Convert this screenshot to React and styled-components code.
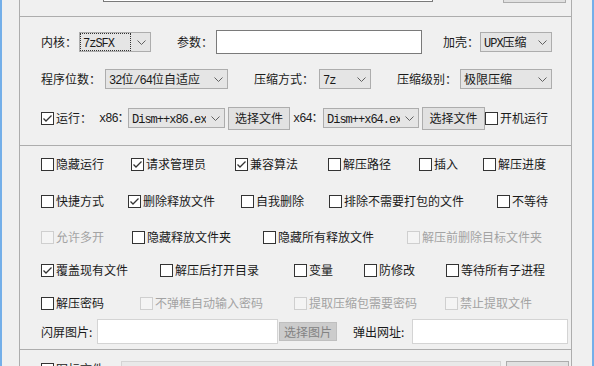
import React from "react";
import styled, { createGlobalStyle } from "styled-components";

const GlobalStyle = createGlobalStyle`
  html, body {
    margin: 0;
    padding: 0;
    background: #f0f0f0;
  }
  body {
    font-family: "Noto Sans CJK SC", "Noto Sans", sans-serif;
    font-size: 12px;
    color: #1a1a1a;
  }
`;

const Frame = styled.div`
  width: 594px;
  height: 366px;
  overflow: hidden;
  display: flex;
  background: #f0f0f0;
`;

const Edge = styled.div`
  width: ${(p) => p.$w}px;
  flex: none;
  box-sizing: border-box;
  border-${(p) => p.$side}: 2px solid #74afe9;
`;

const Panel = styled.div`
  width: 553px;
  flex: none;
  box-sizing: border-box;
  border-left: 1px solid #adadad;
  border-right: 1px solid #adadad;
  display: flex;
  flex-direction: column;
  overflow: hidden;
`;

const TopStrip = styled.div`
  height: 16px;
  flex: none;
  box-sizing: border-box;
  overflow: hidden;
  display: flex;
  align-items: flex-end;
  padding: 0 0 13px 83px;
`;

const Section = styled.div`
  border-top: 1px solid #adadad;
  padding: ${(p) => p.$pt}px 0 0 21px;
  height: ${(p) => p.$h}px;
  box-sizing: border-box;
  display: flex;
  flex-direction: column;
  flex: none;
`;

const Row = styled.div`
  display: flex;
  align-items: ${(p) => p.$align || "center"};
  height: ${(p) => p.$h || 20}px;
  margin-top: ${(p) => p.$mt || 0}px;
  flex: none;
`;

const Label = styled.span`
  width: ${(p) => p.$w}px;
  margin-left: ${(p) => p.$ml || 0}px;
  flex: none;
  white-space: nowrap;
  line-height: 16px;
`;

const Mono = styled.span`
  font-family: "Liberation Mono", "DejaVu Sans Mono", monospace;
  font-size: 12px;
  letter-spacing: -1px;
`;

const SelectBox = styled.div`
  width: ${(p) => p.$w}px;
  height: 20px;
  margin-left: ${(p) => p.$ml || 0}px;
  flex: none;
  box-sizing: border-box;
  background: #e5e5e5;
  border: 1px solid #adadad;
  display: flex;
  align-items: center;
  padding: 0 4px 0 1px;
`;

const Value = styled.span`
  flex: 1;
  min-width: 0;
  overflow: hidden;
  white-space: nowrap;
  height: 16px;
  line-height: 16px;
  padding-left: 2px;
  margin-right: ${(p) => (p.$focus ? 7 : 5)}px;
  box-sizing: border-box;
  outline: ${(p) => (p.$focus ? "1px dotted #333" : "none")};
`;

const TextBox = styled.div`
  width: ${(p) => p.$w}px;
  height: ${(p) => p.$h}px;
  margin-left: ${(p) => p.$ml || 0}px;
  margin-bottom: ${(p) => p.$mb || 0}px;
  flex: none;
  box-sizing: border-box;
  background: ${(p) => (p.$disabled ? "#e9e9e9" : "#fff")};
  border: 1px solid ${(p) => (p.$dark ? "#7a7a7a" : "#d4d4d4")};
  overflow: hidden;
  white-space: nowrap;
  padding: 1px 3px;
  line-height: 20px;
`;

const Button = styled.div`
  width: ${(p) => p.$w}px;
  height: ${(p) => p.$h || 23}px;
  margin-left: ${(p) => p.$ml || 0}px;
  flex: none;
  box-sizing: border-box;
  background: ${(p) => (p.$disabled ? "#cccccc" : "#e1e1e1")};
  border: 1px solid ${(p) => (p.$disabled ? "#bfbfbf" : "#adadad")};
  color: ${(p) => (p.$disabled ? "#838383" : "#1a1a1a")};
  display: flex;
  align-items: center;
  justify-content: center;
  white-space: nowrap;
  line-height: 16px;
`;

const CheckWrap = styled.label`
  width: ${(p) => (p.$w ? `${p.$w}px` : "auto")};
  flex: none;
  display: flex;
  align-items: center;
  gap: 2px;
  white-space: nowrap;
  line-height: 16px;
  color: ${(p) => (p.$disabled ? "#a3a3a3" : "#1a1a1a")};
`;

const Box = styled.span`
  width: 13px;
  height: 13px;
  flex: none;
  box-sizing: border-box;
  background: ${(p) => (p.$disabled ? "#f4f4f4" : "#fff")};
  border: 1px solid ${(p) => (p.$disabled ? "#cfcfcf" : "#333")};
  display: flex;
  align-items: center;
  justify-content: center;
`;

const mixed = (t) =>
  t
    .split(/([\x20-\x7e]+)/)
    .filter(Boolean)
    .map((s, i) => (/[\x20-\x7e]/.test(s) ? <Mono key={i}>{s}</Mono> : s));

const Chevron = () => (
  <svg width="9" height="5" viewBox="0 0 9 5" style={{ flex: "none" }}>
    <polyline points="0.5,0.5 4.5,4.5 8.5,0.5" fill="none" stroke="#606060" strokeWidth="1" />
  </svg>
);

const Select = ({ w, ml, value, focus }) => (
  <SelectBox $w={w} $ml={ml}>
    <Value $focus={focus}>{mixed(value)}</Value>
    <Chevron />
  </SelectBox>
);

const Check = ({ w, checked, disabled, children }) => (
  <CheckWrap $w={w} $disabled={disabled}>
    <Box $disabled={disabled}>
      {checked && (
        <svg width="11" height="11" viewBox="0 0 11 11">
          <polyline points="1.5,5.5 4,8 9.5,2.5" fill="none" stroke="#333" strokeWidth="1.3" />
        </svg>
      )}
    </Box>
    {children}
  </CheckWrap>
);

const checkRows = [
  {
    mt: 0,
    items: [
      ["隐藏运行", 90],
      ["请求管理员", 104, true],
      ["兼容算法", 93, true],
      ["解压路径", 91],
      ["插入", 64],
      ["解压进度"],
    ],
  },
  {
    mt: 17,
    items: [
      ["快捷方式", 87],
      ["删除释放文件", 113, true],
      ["自我删除", 88],
      ["排除不需要打包的文件", 168],
      ["不等待"],
    ],
  },
  {
    mt: 16,
    items: [
      ["允许多开", 91, false, true],
      ["隐藏释放文件夹", 131],
      ["隐藏所有释放文件", 144],
      ["解压前删除目标文件夹", 0, false, true],
    ],
  },
  {
    mt: 13,
    items: [
      ["覆盖现有文件", 119, true],
      ["解压后打开目录", 134],
      ["变量", 70],
      ["防修改", 82],
      ["等待所有子进程"],
    ],
  },
  {
    mt: 13,
    items: [
      ["解压密码", 99],
      ["不弹框自动输入密码", 154, false, true],
      ["提取压缩包需要密码", 151, false, true],
      ["禁止提取文件", 0, false, true],
    ],
  },
];

export default function App() {
  return (
    <>
      <GlobalStyle />
      <Frame>
        <Edge $w={19} $side="left" />
        <Panel>
          <TopStrip>
            <TextBox $w={330} $h={24} $mb={1} $dark />
            <Button $w={63} $ml={70} />
          </TopStrip>

          <Section $pt={13} $h={129}>
            <Row $h={24}>
              <Label $w={38}>内核：</Label>
              <Select w={72} value="7zSFX" focus />
              <Label $w={39} $ml={26}>参数：</Label>
              <TextBox $w={206} $h={24} $dark />
              <Label $w={37} $ml={21}>加壳：</Label>
              <Select w={72} value="UPX压缩" />
            </Row>
            <Row $h={24} $mt={13}>
              <Label $w={64}>程序位数：</Label>
              <Select w={123} value="32位/64位自适应" />
              <Label $w={65} $ml={26}>压缩方式：</Label>
              <Select w={52} value="7z" />
              <Label $w={63} $ml={26}>压缩级别：</Label>
              <Select w={92} value="极限压缩" />
            </Row>
            <Row $h={24} $mt={15}>
              <Check w={58} checked>运行：</Check>
              <Label $w={29}>{mixed("x86")}：</Label>
              <Select w={97} value="Dism++x86.exe" />
              <Button $w={62} $ml={3}>选择文件</Button>
              <Label $w={30} $ml={3}>{mixed("x64")}：</Label>
              <Select w={96} value="Dism++x64.exe" />
              <Button $w={63} $ml={3}>选择文件</Button>
              <Check>开机运行</Check>
            </Row>
          </Section>

          <Section $pt={8} $h={204}>
            {checkRows.map((r, i) => (
              <Row key={i} $mt={r.mt}>
                {r.items.map(([t, w, c, d]) => (
                  <Check key={t} w={w} checked={c} disabled={d}>
                    {t}
                  </Check>
                ))}
              </Row>
            ))}
            <Row $h={25} $mt={6}>
              <Label $w={56}>闪屏图片:</Label>
              <TextBox $w={181} $h={25} />
              <Button $w={58} $h={19} $ml={1} $disabled>选择图片</Button>
              <Label $w={59} $ml={16}>弹出网址:</Label>
              <TextBox $w={156} $h={25} />
            </Row>
          </Section>

          <Section $pt={11} $h={40}>
            <Row $h={24} $align="flex-start">
              <Check w={80} checked>图标文件</Check>
              <TextBox $w={380} $h={24} $disabled>
                {mixed("D:\\Program Files\\Dism++\\Dism++x86.exe")}
              </TextBox>
              <Button $w={63} $ml={5}>文件导入</Button>
            </Row>
          </Section>
        </Panel>
        <Edge $w={22} $side="right" />
      </Frame>
    </>
  );
}
